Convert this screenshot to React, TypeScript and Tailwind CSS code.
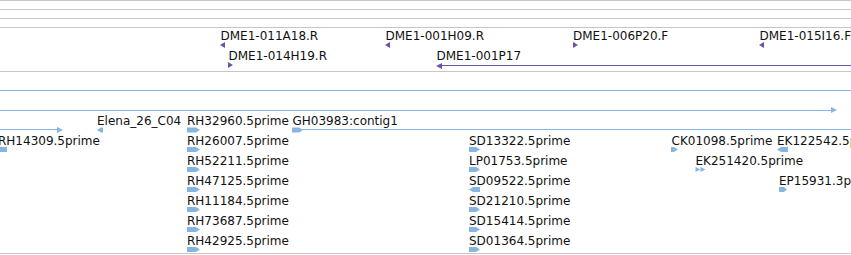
import React from "react";

const BLUE = "#86b6df";
const PURPLE = "#6e51a9";

type Label = { t: string; x: number; y: number };

const labels: Label[] = [
  { t: "DME1-011A18.R", x: 220.5, y: 29 },
  { t: "DME1-001H09.R", x: 385.5, y: 29 },
  { t: "DME1-006P20.F", x: 573, y: 29 },
  { t: "DME1-015I16.F", x: 759.5, y: 29 },
  { t: "DME1-014H19.R", x: 228.5, y: 49 },
  { t: "DME1-001P17", x: 436.5, y: 49 },
  { t: "Elena_26_C04", x: 97, y: 114 },
  { t: "RH32960.5prime", x: 187, y: 114 },
  { t: "GH03983:contig1", x: 292.5, y: 114 },
  { t: "RH14309.5prime", x: -2, y: 134 },
  { t: "RH26007.5prime", x: 187, y: 134 },
  { t: "SD13322.5prime", x: 469, y: 134 },
  { t: "CK01098.5prime", x: 671.5, y: 134 },
  { t: "EK122542.5prime", x: 777, y: 134 },
  { t: "RH52211.5prime", x: 187, y: 154 },
  { t: "LP01753.5prime", x: 469, y: 154 },
  { t: "EK251420.5prime", x: 695.5, y: 154 },
  { t: "RH47125.5prime", x: 187, y: 174 },
  { t: "SD09522.5prime", x: 469, y: 174 },
  { t: "EP15931.3prime", x: 779, y: 174 },
  { t: "RH11184.5prime", x: 187, y: 194 },
  { t: "SD21210.5prime", x: 469, y: 194 },
  { t: "RH73687.5prime", x: 187, y: 214 },
  { t: "SD15414.5prime", x: 469, y: 214 },
  { t: "RH42925.5prime", x: 187, y: 234 },
  { t: "SD01364.5prime", x: 469, y: 234 },
];

type Glyph = { x: number; y: number; pts: string; c: string };

const triL = "0,3 5,0 5,6";
const triR = "0,0 5,3 0,6";
const blockR13 = "0,0 9,0 13,2.5 9,5 0,5";
const blockR11 = "0,0 7,0 11,2.5 7,5 0,5";
const blockL11 = "0,2.5 4,0 11,0 11,5 4,5";

const glyphs: Glyph[] = [
  { x: 220, y: 42, pts: triL, c: PURPLE },
  { x: 385, y: 42, pts: triL, c: PURPLE },
  { x: 573, y: 42, pts: triR, c: PURPLE },
  { x: 759, y: 42, pts: triL, c: PURPLE },
  { x: 228, y: 62, pts: triR, c: PURPLE },
  { x: 436, y: 63, pts: "0,3 6,0 6,6", c: PURPLE },
  { x: 831, y: 107, pts: "0,0 6,3 0,6", c: BLUE },
  { x: 57, y: 127, pts: "0,0 6,3 0,6", c: BLUE },
  { x: 97, y: 127.5, pts: "0,2.5 4,0 6,0 6,5 4,5", c: BLUE },
  { x: 187, y: 127.5, pts: blockR13, c: BLUE },
  { x: 292, y: 127.5, pts: "0,0 7,0 11,2.5 7,5 0,5", c: BLUE },
  { x: -4, y: 147, pts: "0,2.5 4,0 11,0 11,5 4,5", c: BLUE },
  { x: 187, y: 147, pts: blockR13, c: BLUE },
  { x: 469, y: 147, pts: blockR11, c: BLUE },
  { x: 671, y: 147, pts: "0,0 3,0 7,2.5 3,5 0,5", c: BLUE },
  { x: 777, y: 147, pts: blockL11, c: BLUE },
  { x: 187, y: 167, pts: blockR13, c: BLUE },
  { x: 469, y: 167, pts: blockR11, c: BLUE },
  { x: 695.5, y: 167, pts: "0,0 5,2.5 0,5", c: BLUE },
  { x: 700.5, y: 167, pts: "0,0 5,2.5 0,5", c: BLUE },
  { x: 187, y: 187, pts: blockR13, c: BLUE },
  { x: 469, y: 187, pts: blockL11, c: BLUE },
  { x: 779, y: 187, pts: "0,0 5,0 8,2.5 5,5 0,5", c: BLUE },
  { x: 187, y: 207, pts: blockR13, c: BLUE },
  { x: 469, y: 207, pts: blockR11, c: BLUE },
  { x: 187, y: 227, pts: blockR13, c: BLUE },
  { x: 469, y: 227, pts: blockR11, c: BLUE },
  { x: 187, y: 247, pts: blockR13, c: BLUE },
  { x: 469, y: 247, pts: blockR11, c: BLUE },
];

type Line = { x1: number; x2: number; y: number; c: string };

const lines: Line[] = [
  { x1: 0, x2: 851, y: 0, c: "#c6c6c6" },
  { x1: 0, x2: 851, y: 9, c: "#c6c6c6" },
  { x1: 0, x2: 851, y: 18, c: "#c6c6c6" },
  { x1: 0, x2: 851, y: 27, c: "#c6c6c6" },
  { x1: 0, x2: 851, y: 71, c: "#c6c6c6" },
  { x1: 0, x2: 851, y: 253, c: "#c6c6c6" },
  { x1: 440, x2: 851, y: 65.5, c: PURPLE },
  { x1: 0, x2: 851, y: 90, c: BLUE },
  { x1: 0, x2: 833, y: 110, c: BLUE },
  { x1: 0, x2: 58, y: 129.5, c: BLUE },
  { x1: 300, x2: 851, y: 129.5, c: BLUE },
];

export default function App() {
  return (
    <div className="relative w-[851px] h-[255px] overflow-hidden bg-white">
      <svg
        className="absolute left-0 top-0"
        width={851}
        height={255}
        viewBox="0 0 851 255"
      >
        {lines.map((l, i) => (
          <rect key={i} x={l.x1} y={Math.floor(l.y)} width={l.x2 - l.x1} height={1} fill={l.c} />
        ))}
        {glyphs.map((g, i) => (
          <polygon key={i} points={g.pts} fill={g.c} transform={`translate(${g.x} ${g.y})`} />
        ))}
      </svg>
      {labels.map((l, i) => (
        <div
          key={i}
          className="absolute whitespace-nowrap text-[12px] leading-[14px] text-[#111] font-['DejaVu_Sans',sans-serif]"
          style={{ left: l.x, top: l.y }}
        >
          {l.t}
        </div>
      ))}
    </div>
  );
}
